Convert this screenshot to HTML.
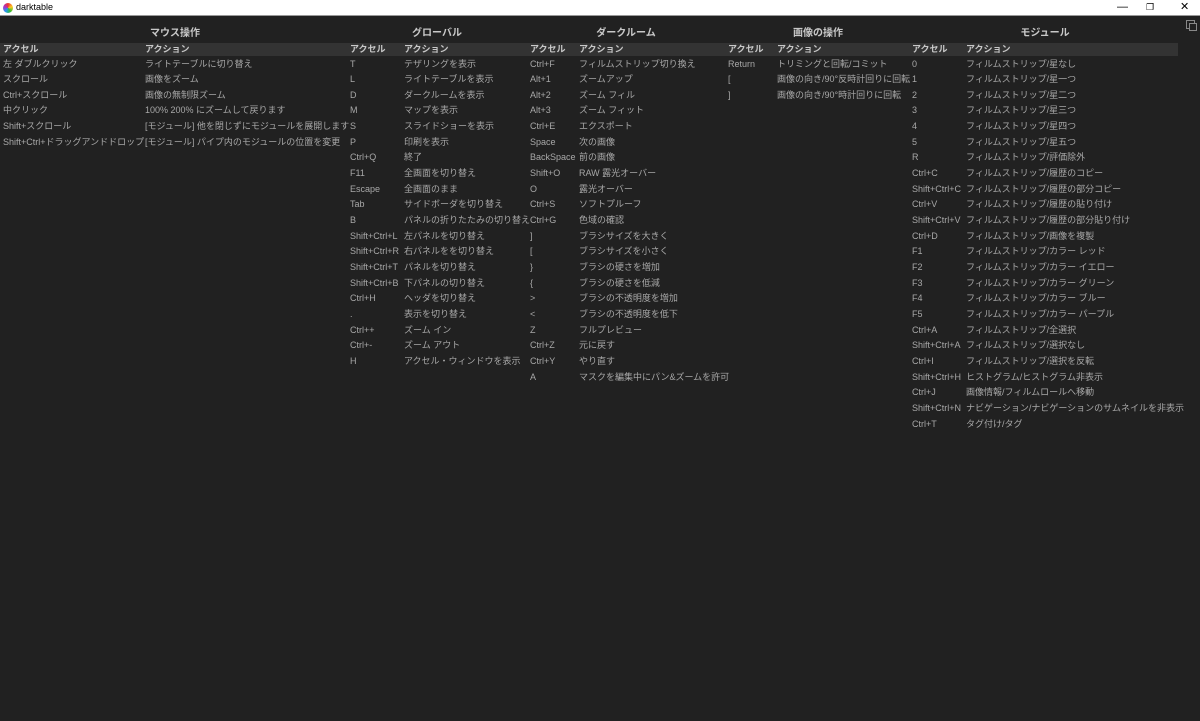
<!DOCTYPE html>
<html><head><meta charset="utf-8"><style>
*{margin:0;padding:0;box-sizing:border-box}
body{width:1200px;height:721px;background:#212121;overflow:hidden;position:relative;font-family:"Liberation Sans","Noto Sans CJK JP",sans-serif;font-size:9px;color:#a8a8a8}
#tb{position:absolute;left:0;top:0;width:1200px;height:16px;background:#fff;border-bottom:1px solid #999;color:#000}
#tb .t{position:absolute;left:16px;top:2px;font-size:9px}
#tb .logo{position:absolute;left:3px;top:3px;width:10px;height:10px;border-radius:50%;background:conic-gradient(#e33,#fc2,#3b3,#29e,#a3c,#e33)}
#tb .c{position:absolute;top:0;font-size:11px;line-height:15px}
.bar{position:absolute;left:0;top:43px;width:1178px;height:13px;background:#333}
.h{position:absolute;top:24px;font-size:10px;font-weight:bold;color:#c8c8c8;transform:translateX(-50%);white-space:nowrap}
.col{position:absolute;top:43px;white-space:nowrap;line-height:15.65px}
.col div:first-child{font-weight:bold;color:#c8c8c8;line-height:13px;margin-bottom:0.5px}
</style></head><body>
<div id="tb"><div class="logo"></div><div class="t">darktable</div>
<div class="c" style="left:1117px">&#8212;</div>
<div class="c" style="left:1146px;font-size:9px">&#10064;</div>
<div class="c" style="left:1180px">&#10005;</div></div>
<div class="bar"></div>
<div style="position:absolute;left:1186px;top:20px;width:9px;height:9px;border:1px solid #888"></div>
<div style="position:absolute;left:1189px;top:23px;width:8px;height:8px;border:1px solid #888;background:#212121"></div>
<div class="h" style="left:175px">マウス操作</div>
<div class="h" style="left:437px">グローバル</div>
<div class="h" style="left:626px">ダークルーム</div>
<div class="h" style="left:818px">画像の操作</div>
<div class="h" style="left:1045px">モジュール</div>

<div class="col" style="left:3px"><div>アクセル</div><div>左 ダブルクリック</div><div>スクロール</div><div>Ctrl+スクロール</div><div>中クリック</div><div>Shift+スクロール</div><div>Shift+Ctrl+ドラッグアンドドロップ</div></div>
<div class="col" style="left:145px"><div>アクション</div><div>ライトテーブルに切り替え</div><div>画像をズーム</div><div>画像の無制限ズーム</div><div>100% 200% にズームして戻ります</div><div>[モジュール] 他を閉じずにモジュールを展開します</div><div>[モジュール] パイプ内のモジュールの位置を変更</div></div>

<div class="col" style="left:350px"><div>アクセル</div><div>T</div><div>L</div><div>D</div><div>M</div><div>S</div><div>P</div><div>Ctrl+Q</div><div>F11</div><div>Escape</div><div>Tab</div><div>B</div><div>Shift+Ctrl+L</div><div>Shift+Ctrl+R</div><div>Shift+Ctrl+T</div><div>Shift+Ctrl+B</div><div>Ctrl+H</div><div>.</div><div>Ctrl++</div><div>Ctrl+-</div><div>H</div></div>
<div class="col" style="left:404px"><div>アクション</div><div>テザリングを表示</div><div>ライトテーブルを表示</div><div>ダークルームを表示</div><div>マップを表示</div><div>スライドショーを表示</div><div>印刷を表示</div><div>終了</div><div>全画面を切り替え</div><div>全画面のまま</div><div>サイドボーダを切り替え</div><div>パネルの折りたたみの切り替え</div><div>左パネルを切り替え</div><div>右パネルをを切り替え</div><div>パネルを切り替え</div><div>下パネルの切り替え</div><div>ヘッダを切り替え</div><div>表示を切り替え</div><div>ズーム イン</div><div>ズーム アウト</div><div>アクセル・ウィンドウを表示</div></div>

<div class="col" style="left:530px"><div>アクセル</div><div>Ctrl+F</div><div>Alt+1</div><div>Alt+2</div><div>Alt+3</div><div>Ctrl+E</div><div>Space</div><div>BackSpace</div><div>Shift+O</div><div>O</div><div>Ctrl+S</div><div>Ctrl+G</div><div>]</div><div>[</div><div>}</div><div>{</div><div>&gt;</div><div>&lt;</div><div>Z</div><div>Ctrl+Z</div><div>Ctrl+Y</div><div>A</div></div>
<div class="col" style="left:579px"><div>アクション</div><div>フィルムストリップ切り換え</div><div>ズームアップ</div><div>ズーム フィル</div><div>ズーム フィット</div><div>エクスポート</div><div>次の画像</div><div>前の画像</div><div>RAW 露光オーバー</div><div>露光オーバー</div><div>ソフトプルーフ</div><div>色域の確認</div><div>ブラシサイズを大きく</div><div>ブラシサイズを小さく</div><div>ブラシの硬さを増加</div><div>ブラシの硬さを低減</div><div>ブラシの不透明度を増加</div><div>ブラシの不透明度を低下</div><div>フルプレビュー</div><div>元に戻す</div><div>やり直す</div><div>マスクを編集中にパン&amp;ズームを許可</div></div>

<div class="col" style="left:728px"><div>アクセル</div><div>Return</div><div>[</div><div>]</div></div>
<div class="col" style="left:777px"><div>アクション</div><div>トリミングと回転/コミット</div><div>画像の向き/90°反時計回りに回転</div><div>画像の向き/90°時計回りに回転</div></div>

<div class="col" style="left:912px"><div>アクセル</div><div>0</div><div>1</div><div>2</div><div>3</div><div>4</div><div>5</div><div>R</div><div>Ctrl+C</div><div>Shift+Ctrl+C</div><div>Ctrl+V</div><div>Shift+Ctrl+V</div><div>Ctrl+D</div><div>F1</div><div>F2</div><div>F3</div><div>F4</div><div>F5</div><div>Ctrl+A</div><div>Shift+Ctrl+A</div><div>Ctrl+I</div><div>Shift+Ctrl+H</div><div>Ctrl+J</div><div>Shift+Ctrl+N</div><div>Ctrl+T</div></div>
<div class="col" style="left:966px"><div>アクション</div><div>フィルムストリップ/星なし</div><div>フィルムストリップ/星一つ</div><div>フィルムストリップ/星二つ</div><div>フィルムストリップ/星三つ</div><div>フィルムストリップ/星四つ</div><div>フィルムストリップ/星五つ</div><div>フィルムストリップ/評価除外</div><div>フィルムストリップ/履歴のコピー</div><div>フィルムストリップ/履歴の部分コピー</div><div>フィルムストリップ/履歴の貼り付け</div><div>フィルムストリップ/履歴の部分貼り付け</div><div>フィルムストリップ/画像を複製</div><div>フィルムストリップ/カラー レッド</div><div>フィルムストリップ/カラー イエロー</div><div>フィルムストリップ/カラー グリーン</div><div>フィルムストリップ/カラー ブルー</div><div>フィルムストリップ/カラー パープル</div><div>フィルムストリップ/全選択</div><div>フィルムストリップ/選択なし</div><div>フィルムストリップ/選択を反転</div><div>ヒストグラム/ヒストグラム非表示</div><div>画像情報/フィルムロールへ移動</div><div>ナビゲーション/ナビゲーションのサムネイルを非表示</div><div>タグ付け/タグ</div></div>
</body></html>
